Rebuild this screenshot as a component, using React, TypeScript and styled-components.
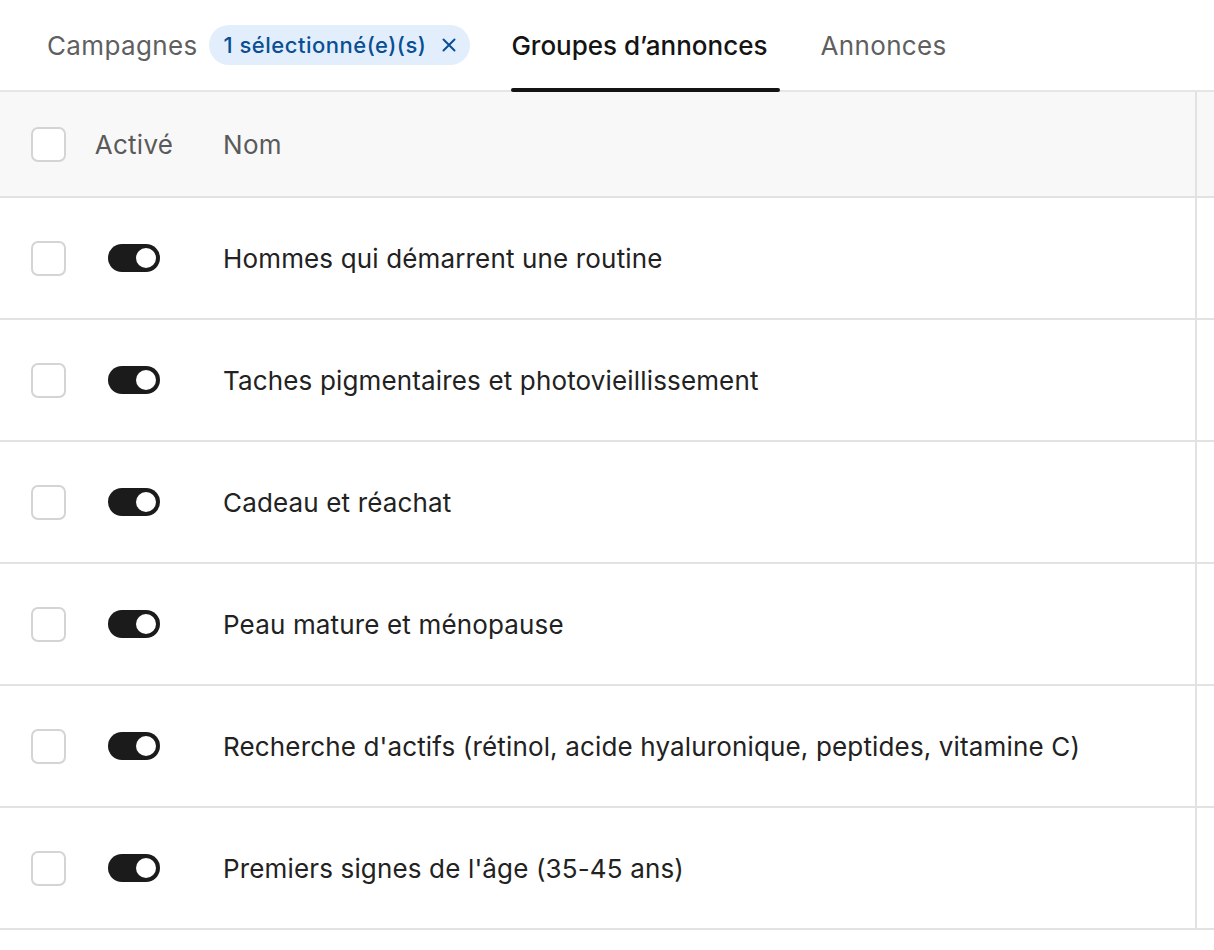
import React, { useState } from 'react';
import styled, { createGlobalStyle } from 'styled-components';

const GlobalStyle = createGlobalStyle`
  html, body {
    margin: 0;
    padding: 0;
    background: #ffffff;
    font-family: Inter, "Noto Sans", sans-serif;
    overflow: hidden;
  }
`

const groups = [
  'Hommes qui démarrent une routine',
  'Taches pigmentaires et photovieillissement',
  'Cadeau et réachat',
  'Peau mature et ménopause',
  "Recherche d'actifs (rétinol, acide hyaluronique, peptides, vitamine C)",
  "Premiers signes de l'âge (35-45 ans)",
]

function App() {
  const [active, setActive] = useState<boolean[]>(groups.map(() => true))
  const [checked, setChecked] = useState<boolean[]>(groups.map(() => false))

  return (
    <Page>
      <GlobalStyle />
      <TabBar>
        <Tab>Campagnes</Tab>
        <Chip>
          1 sélectionné(e)(s)
          <ChipClose aria-label="Effacer">
            <svg width="16" height="16" viewBox="0 0 16 16" fill="none">
              <path d="M2.5 2.5l11 11M13.5 2.5l-11 11" stroke="currentColor" strokeWidth="2" strokeLinecap="round" />
            </svg>
          </ChipClose>
        </Chip>
        <Tab $selected>Groupes d’annonces</Tab>
        <Tab>Annonces</Tab>
      </TabBar>

      <Table>
        <HeaderRow>
          <CheckCell><Checkbox /></CheckCell>
          <ToggleCell><HeaderLabel>Activé</HeaderLabel></ToggleCell>
          <NameCell><HeaderLabel>Nom</HeaderLabel></NameCell>
          <ExtraCell />
        </HeaderRow>
        {groups.map((name, i) => (
          <Row key={name}>
            <CheckCell>
              <Checkbox
                $checked={checked[i]}
                onClick={() => setChecked(checked.map((c, j) => (j === i ? !c : c)))}
              />
            </CheckCell>
            <ToggleCell>
              <Switch
                $on={active[i]}
                onClick={() => setActive(active.map((a, j) => (j === i ? !a : a)))}
              >
                <Knob />
              </Switch>
            </ToggleCell>
            <NameCell>
              <NameText>{name}</NameText>
            </NameCell>
            <ExtraCell />
          </Row>
        ))}
      </Table>
    </Page>
  )
}

export default App

const Page = styled.div`
  width: 1214px;
  height: 950px;
  background: #fff;
`
const TabBar = styled.div`
  display: flex;
  align-items: center;
  height: 90px;
  padding-left: 47px;
  border-bottom: 2px solid #e6e6e6;
  box-sizing: content-box;
`
const Tab = styled.div<{ $selected?: boolean }>`
  position: relative;
  display: flex;
  align-items: center;
  height: 100%;
  font-size: 26px;
  letter-spacing: ${p => (p.$selected ? '0' : '0.35px')};
  color: ${p => (p.$selected ? '#141414' : '#5f5f5f')};
  font-weight: ${p => (p.$selected ? 500 : 400)};
  margin-right: ${p => (p.$selected ? '53px' : '0')};
  cursor: pointer;
  &::after {
    content: '';
    display: ${p => (p.$selected ? 'block' : 'none')};
    position: absolute;
    left: 0;
    right: -12px;
    bottom: -2px;
    height: 4px;
    border-radius: 2px;
    background: #141414;
  }
`
const Chip = styled.div`
  display: flex;
  align-items: center;
  gap: 15px;
  height: 40px;
  margin: 0 41px 0 12px;
  padding: 0 13px 0 14px;
  border-radius: 20px;
  background: #e2eefc;
  color: #0a4f93;
  font-size: 22px;
  font-weight: 500;
  letter-spacing: 0.5px;
`
const ChipClose = styled.span`
  display: flex;
  align-items: center;
  color: #0a4f93;
  cursor: pointer;
`
const Table = styled.div`
  display: flex;
  flex-direction: column;
`
const Row = styled.div`
  display: grid;
  grid-template-columns: 80px 108px 1009px 1fr;
  height: 120px;
  border-bottom: 2px solid #e2e2e2;
`
const HeaderRow = styled(Row)`
  height: 104px;
  background: #f8f8f8;
`
const CheckCell = styled.div`
  display: flex;
  align-items: center;
  padding-left: 31px;
`
const ToggleCell = styled.div`
  display: flex;
  align-items: center;
  justify-content: center;
`
const NameCell = styled.div`
  display: flex;
  align-items: center;
  padding-left: 35px;
  border-right: 2px solid #e2e2e2;
`
const ExtraCell = styled.div``
const HeaderLabel = styled.span`
  font-size: 26px;
  color: #5a5a5a;
  letter-spacing: 0.3px;
`
const NameText = styled.span`
  font-size: 26px;
  color: #222;
  letter-spacing: 0.15px;
`
const Checkbox = styled.div<{ $checked?: boolean }>`
  width: 31px;
  height: 31px;
  border: 2px solid #d4d4d4;
  border-radius: 7px;
  background: ${p => (p.$checked ? '#1b1b1b' : '#fff')};
  cursor: pointer;
`
const Switch = styled.div<{ $on: boolean }>`
  display: flex;
  align-items: center;
  justify-content: ${p => (p.$on ? 'flex-end' : 'flex-start')};
  width: 52px;
  height: 28px;
  padding: 0 4px;
  box-sizing: border-box;
  border-radius: 14px;
  background: ${p => (p.$on ? '#1b1b1b' : '#d0d0d0')};
  cursor: pointer;
`
const Knob = styled.div`
  width: 20px;
  height: 20px;
  border-radius: 50%;
  background: #fff;
`
